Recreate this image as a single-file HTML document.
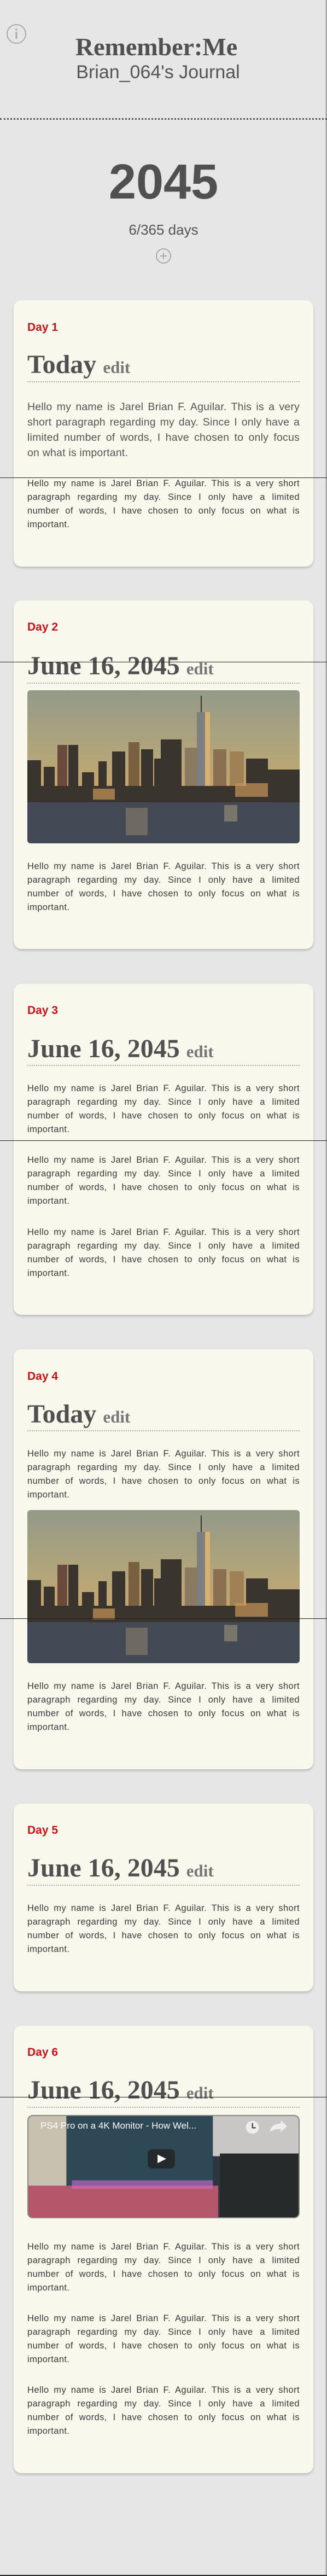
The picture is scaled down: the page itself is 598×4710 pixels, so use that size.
<!DOCTYPE html>
<html><head><meta charset="utf-8">
<style>
*{margin:0;padding:0;box-sizing:border-box}
html,body{width:598px;height:4710px;background:#e6e6e6;overflow:hidden}
body{position:relative;font-family:"Liberation Sans",sans-serif;color:#444}
.abs{position:absolute}
.card{position:absolute;left:25px;width:548px;background:#f8f8ed;border-radius:14px;box-shadow:0 3px 4px rgba(0,0,0,.18)}
.day{position:absolute;left:50px;font:bold 21px/24px "Liberation Sans",sans-serif;color:#cc1018}
.title{position:absolute;left:50px;font:bold 48px/48px "Liberation Serif",serif;color:#505050;white-space:nowrap}
.title small{font-size:31px;color:#777;font-weight:bold}
.dots{position:absolute;left:50px;width:498px;border-top:2px dotted #aaa}
.p{position:absolute;left:50px;width:498px;font-size:16.5px;line-height:25px;color:#3a3a3a;letter-spacing:.4px}
.p span{display:block;text-align:justify;text-align-last:justify;white-space:nowrap}
.p span:last-child{text-align-last:left}
.pl{position:absolute;left:50px;width:498px;font-size:19.5px;line-height:28px;color:#555;letter-spacing:.2px}
.pl span{display:block;text-align:justify;text-align-last:justify;white-space:nowrap}
.pl span:last-child{text-align-last:left}
.hl{position:absolute;left:0;width:598px;height:1px;background:#222}
.img{position:absolute;left:50px;width:498px;border-radius:6px;overflow:hidden}
</style></head><body>

<!-- header -->
<svg class="abs" style="left:11px;top:43px" width="38" height="38" viewBox="0 0 38 38"><circle cx="19" cy="19" r="17" fill="none" stroke="#aaa" stroke-width="2"/><circle cx="19" cy="11" r="1.8" fill="#aaa"/><rect x="17.5" y="15" width="3" height="13" fill="#aaa"/></svg>
<div class="abs" style="left:0;width:572px;top:63px;text-align:center;font:bold 46px/46px 'Liberation Serif',serif;color:#505050">Remember:Me</div>
<div class="abs" style="left:0;width:578px;top:113px;text-align:center;font:34px/38px 'Liberation Sans',sans-serif;color:#555">Brian_064's Journal</div>
<div class="abs" style="left:0;top:216px;width:598px;border-top:3px dotted #555"></div>
<div class="abs" style="left:0;width:598px;top:288px;text-align:center;font:bold 90px/90px 'Liberation Sans',sans-serif;color:#505050">2045</div>
<div class="abs" style="left:0;width:598px;top:407px;text-align:center;font:26px/26px 'Liberation Sans',sans-serif;color:#555">6/365 days</div>
<svg class="abs" style="left:284px;top:453px" width="30" height="30" viewBox="0 0 30 30"><circle cx="15" cy="15" r="13" fill="none" stroke="#aaa" stroke-width="2"/><path d="M15 9v12M9 15h12" stroke="#aaa" stroke-width="2"/></svg>

<svg width="0" height="0" style="position:absolute"><defs>
<linearGradient id="sky" x1="0" y1="0" x2="0" y2="1"><stop offset="0" stop-color="#939a88"/><stop offset=".45" stop-color="#b5a679"/><stop offset=".7" stop-color="#c9a264"/></linearGradient>
<symbol id="city" viewBox="0 0 498 280">
<rect width="498" height="280" fill="url(#sky)"/>
<g fill="#3a342e">
<rect x="0" y="128" width="25" height="90"/><rect x="30" y="140" width="20" height="80"/><rect x="55" y="100" width="18" height="120" fill="#6a4a3a"/><rect x="75" y="100" width="18" height="120"/><rect x="100" y="150" width="22" height="70"/><rect x="130" y="130" width="15" height="90"/><rect x="155" y="112" width="24" height="108"/><rect x="185" y="95" width="20" height="125" fill="#7a6040"/><rect x="208" y="108" width="22" height="112"/><rect x="232" y="125" width="32" height="95"/><rect x="244" y="90" width="38" height="130"/><rect x="288" y="105" width="34" height="115" fill="#8a7a60"/><rect x="317" y="10" width="2" height="30"/><rect x="310" y="40" width="24" height="180" fill="#7d7e80"/><rect x="325" y="40" width="9" height="140" fill="#d8b070"/><rect x="340" y="108" width="24" height="112" fill="#8a7050"/><rect x="370" y="112" width="26" height="108" fill="#a08055"/><rect x="400" y="125" width="40" height="95"/><rect x="440" y="145" width="58" height="75"/>
<rect x="0" y="175" width="498" height="50"/>
</g>
<g fill="#c7965a" opacity=".7"><rect x="120" y="180" width="40" height="20"/><rect x="380" y="170" width="60" height="25"/></g>
<rect y="205" width="498" height="75" fill="#434a55"/>
<rect x="180" y="215" width="40" height="50" fill="#9a8870" opacity=".5"/><rect x="360" y="210" width="24" height="30" fill="#b0a080" opacity=".5"/>
</symbol>
<symbol id="vid" viewBox="0 0 498 189">
<rect width="498" height="189" fill="#2c3540"/>
<rect x="0" y="0" width="70" height="189" fill="#c9c1b0"/>
<rect x="70" y="0" width="270" height="130" fill="#2e4856"/>
<rect x="340" y="0" width="158" height="75" fill="#c9c7c6"/>
<rect x="0" y="130" width="350" height="59" fill="#b5566a"/>
<rect x="80" y="120" width="260" height="16" fill="#d070d0" opacity=".6"/>
<rect x="353" y="70" width="145" height="119" fill="#262a2b"/>
<rect x="220" y="62" width="50" height="36" rx="8" fill="#222" opacity=".8"/>
<path d="M238 72l16 8-16 8z" fill="#fff"/>
<circle cx="413" cy="21" r="12" fill="#eee"/><path d="M413 13v9h6" stroke="#333" stroke-width="2" fill="none"/>
<path d="M445 30c2-12 10-16 20-16v-6l12 11-12 11v-6c-9 0-15 2-20 6z" fill="#eee"/>
</symbol>
</defs></svg>

<!-- card1 -->
<div class="card" style="top:549px;height:487px"></div>
<div class="day" style="top:587px">Day 1</div>
<div class="title" style="top:643px">Today <small>edit</small></div>
<div class="dots" style="top:697px"></div>
<div class="pl" style="top:730px"><span>Hello my name is Jarel Brian F. Aguilar. This is a very</span><span>short paragraph regarding my day. Since I only have a</span><span>limited number of words, I have chosen to only focus</span><span>on what is important.</span></div>
<div class="p" style="top:872px"><span>Hello my name is Jarel Brian F. Aguilar. This is a very short</span><span>paragraph regarding my day. Since I only have a limited</span><span>number of words, I have chosen to only focus on what is</span><span>important.</span></div>

<!-- card2 -->
<div class="card" style="top:1098px;height:637px"></div>
<div class="day" style="top:1135px">Day 2</div>
<div class="title" style="top:1194px">June 16, 2045 <small>edit</small></div>
<div class="dots" style="top:1248px"></div>
<svg class="img" style="top:1262px" width="498" height="280"><use href="#city"/></svg>
<div class="p" style="top:1572px"><span>Hello my name is Jarel Brian F. Aguilar. This is a very short</span><span>paragraph regarding my day. Since I only have a limited</span><span>number of words, I have chosen to only focus on what is</span><span>important.</span></div>

<!-- card3 -->
<div class="card" style="top:1799px;height:605px"></div>
<div class="day" style="top:1836px">Day 3</div>
<div class="title" style="top:1894px">June 16, 2045 <small>edit</small></div>
<div class="dots" style="top:1947px"></div>
<div class="p" style="top:1978px"><span>Hello my name is Jarel Brian F. Aguilar. This is a very short</span><span>paragraph regarding my day. Since I only have a limited</span><span>number of words, I have chosen to only focus on what is</span><span>important.</span></div>
<div class="p" style="top:2109px"><span>Hello my name is Jarel Brian F. Aguilar. This is a very short</span><span>paragraph regarding my day. Since I only have a limited</span><span>number of words, I have chosen to only focus on what is</span><span>important.</span></div>
<div class="p" style="top:2241px"><span>Hello my name is Jarel Brian F. Aguilar. This is a very short</span><span>paragraph regarding my day. Since I only have a limited</span><span>number of words, I have chosen to only focus on what is</span><span>important.</span></div>

<!-- card4 -->
<div class="card" style="top:2467px;height:768px"></div>
<div class="day" style="top:2505px">Day 4</div>
<div class="title" style="top:2562px">Today <small>edit</small></div>
<div class="dots" style="top:2615px"></div>
<div class="p" style="top:2646px"><span>Hello my name is Jarel Brian F. Aguilar. This is a very short</span><span>paragraph regarding my day. Since I only have a limited</span><span>number of words, I have chosen to only focus on what is</span><span>important.</span></div>
<svg class="img" style="top:2761px" width="498" height="280"><use href="#city"/></svg>
<div class="p" style="top:3071px"><span>Hello my name is Jarel Brian F. Aguilar. This is a very short</span><span>paragraph regarding my day. Since I only have a limited</span><span>number of words, I have chosen to only focus on what is</span><span>important.</span></div>

<!-- card5 -->
<div class="card" style="top:3298px;height:343px"></div>
<div class="day" style="top:3335px">Day 5</div>
<div class="title" style="top:3392px">June 16, 2045 <small>edit</small></div>
<div class="dots" style="top:3446px"></div>
<div class="p" style="top:3477px"><span>Hello my name is Jarel Brian F. Aguilar. This is a very short</span><span>paragraph regarding my day. Since I only have a limited</span><span>number of words, I have chosen to only focus on what is</span><span>important.</span></div>

<!-- card6 -->
<div class="card" style="top:3704px;height:818px"></div>
<div class="day" style="top:3741px">Day 6</div>
<div class="title" style="top:3798px">June 16, 2045 <small>edit</small></div>
<div class="dots" style="top:3852px"></div>
<div class="img" style="top:3867px;height:189px;border:2px solid #888;border-radius:10px">
<svg width="494" height="185" viewBox="0 0 498 189" preserveAspectRatio="none" style="display:block"><use href="#vid"/></svg>
<div class="abs" style="left:22px;top:6px;font:17px/24px 'Liberation Sans',sans-serif;color:#fff;white-space:nowrap">PS4 Pro on a 4K Monitor - How Wel...</div>
</div>
<div class="p" style="top:4096px"><span>Hello my name is Jarel Brian F. Aguilar. This is a very short</span><span>paragraph regarding my day. Since I only have a limited</span><span>number of words, I have chosen to only focus on what is</span><span>important.</span></div>
<div class="p" style="top:4227px"><span>Hello my name is Jarel Brian F. Aguilar. This is a very short</span><span>paragraph regarding my day. Since I only have a limited</span><span>number of words, I have chosen to only focus on what is</span><span>important.</span></div>
<div class="p" style="top:4358px"><span>Hello my name is Jarel Brian F. Aguilar. This is a very short</span><span>paragraph regarding my day. Since I only have a limited</span><span>number of words, I have chosen to only focus on what is</span><span>important.</span></div>

<!-- artifact lines -->
<div class="hl" style="top:873px"></div>
<div class="hl" style="top:1210px"></div>
<div class="hl" style="top:2085px"></div>
<div class="hl" style="top:2959px"></div>
<div class="hl" style="top:3834px"></div>
<div class="hl" style="top:4708px;height:2px"></div>
<div class="abs" style="left:596px;top:0;width:1px;height:4710px;background:#555"></div>
</body></html>
